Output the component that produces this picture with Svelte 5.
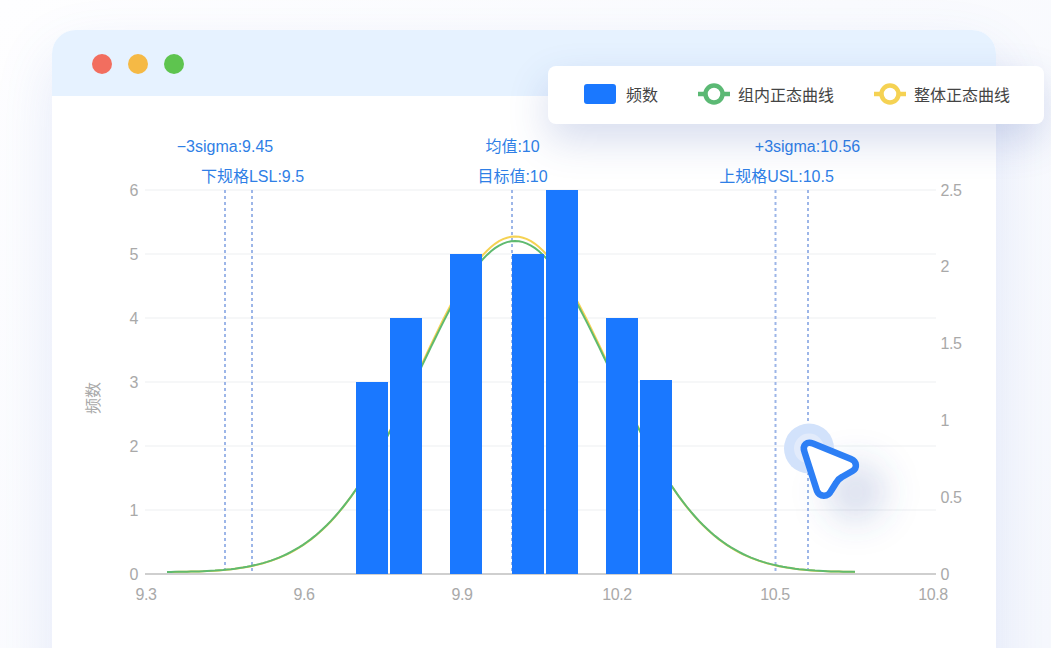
<script>
  const leftTicks = [0, 1, 2, 3, 4, 5, 6];
  const rightTicks = ['0', '0.5', '1', '1.5', '2', '2.5'];
  const xTicks = [
    { label: '9.3', x: 146 },
    { label: '9.6', x: 304 },
    { label: '9.9', x: 462 },
    { label: '10.2', x: 617 },
    { label: '10.5', x: 775 },
    { label: '10.8', x: 933 }
  ];
  const bars = [
    { x: 356, top: 382 },
    { x: 390, top: 318 },
    { x: 450, top: 254 },
    { x: 512, top: 254 },
    { x: 546, top: 190 },
    { x: 606, top: 318 },
    { x: 640, top: 380 }
  ];
  const marks = [225, 252, 512, 775.5, 808];
  const labels = [
    { text: '−3sigma:9.45', x: 225, y: 152 },
    { text: '下规格LSL:9.5', x: 252.5, y: 182 },
    { text: '均值:10', x: 512.5, y: 152 },
    { text: '目标值:10', x: 512.5, y: 182 },
    { text: '+3sigma:10.56', x: 807.5, y: 152 },
    { text: '上规格USL:10.5', x: 776.5, y: 182 }
  ];

  const yOf = (v) => 574 - v * 64;

  function curve(peak, sigma) {
    let d = '';
    for (let x = 167; x <= 855; x += 4) {
      const dx = (x - 515) / sigma;
      const h = peak * Math.exp(-0.5 * dx * dx);
      // tails flatten out a little faster than a plain gaussian
      const y = 572 - (h * h) / (h + 2);
      d += (d ? 'L' : 'M') + x + ' ' + y.toFixed(1);
    }
    return d;
  }
</script>

<div class="page">
  <div class="window">
    <div class="titlebar">
      <span class="dot red"></span>
      <span class="dot amber"></span>
      <span class="dot green"></span>
    </div>
    <svg class="chart" viewBox="52 96 944 552" width="944" height="552">
      <defs>
        <filter id="soft" x="-100%" y="-100%" width="300%" height="300%">
          <feGaussianBlur stdDeviation="17" />
        </filter>
      </defs>

      {#each leftTicks as t}
        {#if t > 0}
          <line x1="145" x2="936" y1={yOf(t)} y2={yOf(t)} class="grid" />
        {/if}
        <text x="138" y={yOf(t) + 5.5} text-anchor="end" class="tick">{t}</text>
      {/each}
      {#each rightTicks as t, i}
        <text x="940.5" y={574 - i * 76.8 + 5.5} class="tick">{t}</text>
      {/each}
      <line x1="145" x2="936" y1="574" y2="574" class="axis" />
      {#each xTicks as t}
        <text x={t.x} y="600" text-anchor="middle" class="tick">{t.label}</text>
      {/each}
      <text class="tick name" transform="translate(99 398) rotate(-90)" text-anchor="middle">频数</text>

      {#each marks as x}
        <line x1={x} x2={x} y1="190" y2="574" class="mark" />
      {/each}

      <path d={curve(337.5, 95.5)} class="line yellow" />
      <path d={curve(333, 96)} class="line green" />

      {#each bars as b}
        <rect x={b.x} y={b.top} width="32" height={574 - b.top} class="bar" />
      {/each}

      {#each labels as l}
        <text x={l.x} y={l.y} text-anchor="middle" class="mark-label">{l.text}</text>
      {/each}

      <ellipse cx="856" cy="492" rx="30" ry="30" class="pointer-shadow" filter="url(#soft)" />
      <circle cx="809" cy="448.5" r="25" class="halo" />
      <circle cx="809" cy="448.5" r="15" class="halo-inner" />
      <path
        class="pointer"
        d="M804.5 452 C802 445 807 441 813 443.5 L851 459 C857 461.5 857.5 468 852.5 471 L842 477 C839 478.5 837.5 480 836 483 L831 491 C828 497.5 819.5 497 817 491 Z"
      />
    </svg>
  </div>

  <div class="legend">
    <div class="item"><span class="swatch"></span>频数</div>
    <div class="item">
      <svg width="32" height="22" viewBox="0 0 32 22" class="key green-key">
        <line x1="0" x2="32" y1="11" y2="11" />
        <circle cx="16" cy="11" r="8.5" />
      </svg>
      组内正态曲线
    </div>
    <div class="item">
      <svg width="32" height="22" viewBox="0 0 32 22" class="key yellow-key">
        <line x1="0" x2="32" y1="11" y2="11" />
        <circle cx="16" cy="11" r="8.5" />
      </svg>
      整体正态曲线
    </div>
  </div>
</div>

<style>
  :global(body) { margin: 0; }
  .page {
    position: relative; box-sizing: border-box; width: 1051px; height: 648px; overflow: hidden;
    padding: 30px 55px 0 52px;
    background: linear-gradient(135deg, #fefeff 0%, #f6f8fd 100%);
    font-family: "Liberation Sans", "Noto Sans CJK SC", sans-serif;
  }
  .window {
    width: 944px; height: 700px; border-radius: 24px 24px 0 0; background: #fff; overflow: hidden;
    box-shadow: 0 24px 60px rgba(80, 110, 210, 0.14);
  }
  .titlebar {
    height: 66px; box-sizing: border-box; padding: 2px 0 0 40px; background: #e6f2ff;
    display: flex; align-items: center; gap: 16px;
  }
  .dot { width: 20px; height: 20px; border-radius: 50%; }
  .red { background: #f26e5f; }
  .amber { background: #f5b945; }
  .green { background: #5ec44f; }
  .chart { display: block; }
  .grid { stroke: #f3f4f6; stroke-width: 1.5; }
  .axis { stroke: #cfcfcf; stroke-width: 2; }
  .tick { font-size: 16px; letter-spacing: -0.4px; fill: #a9a9a9; }
  .name { letter-spacing: 0; }
  .mark { stroke: #9db6e8; stroke-width: 2; stroke-dasharray: 3 3; }
  .mark-label { font-size: 16px; fill: #2f7fe6; }
  .bar { fill: #1a78ff; }
  .line { fill: none; stroke-width: 2; }
  .line.yellow { stroke: #f5d253; }
  .line.green { stroke: #5fba6f; }
  .halo { fill: #d2e2fb; }
  .halo-inner { fill: #e2ebfb; }
  .pointer-shadow { fill: rgba(70, 100, 170, 0.2); }
  .pointer { fill: #fff; stroke: #2d7ff5; stroke-width: 6.5; stroke-linejoin: round; }
  .legend {
    position: absolute; left: 548px; top: 66px; width: 496px; height: 58px; box-sizing: border-box;
    padding: 0 0 2px 36px; display: flex; align-items: center; gap: 40px;
    background: #fff; border-radius: 8px; box-shadow: 0 16px 40px rgba(50, 80, 170, 0.2);
    font-size: 16px; color: #444;
  }
  .item { display: flex; align-items: center; gap: 8px; white-space: nowrap; }
  .swatch { width: 32px; height: 20px; margin-right: 2px; border-radius: 3px; background: #1a78ff; }
  .key line { stroke-width: 4.5; }
  .key circle { fill: #fff; stroke-width: 4.5; }
  .green-key line, .green-key circle { stroke: #5bb974; }
  .yellow-key line, .yellow-key circle { stroke: #f5d253; }
</style>
